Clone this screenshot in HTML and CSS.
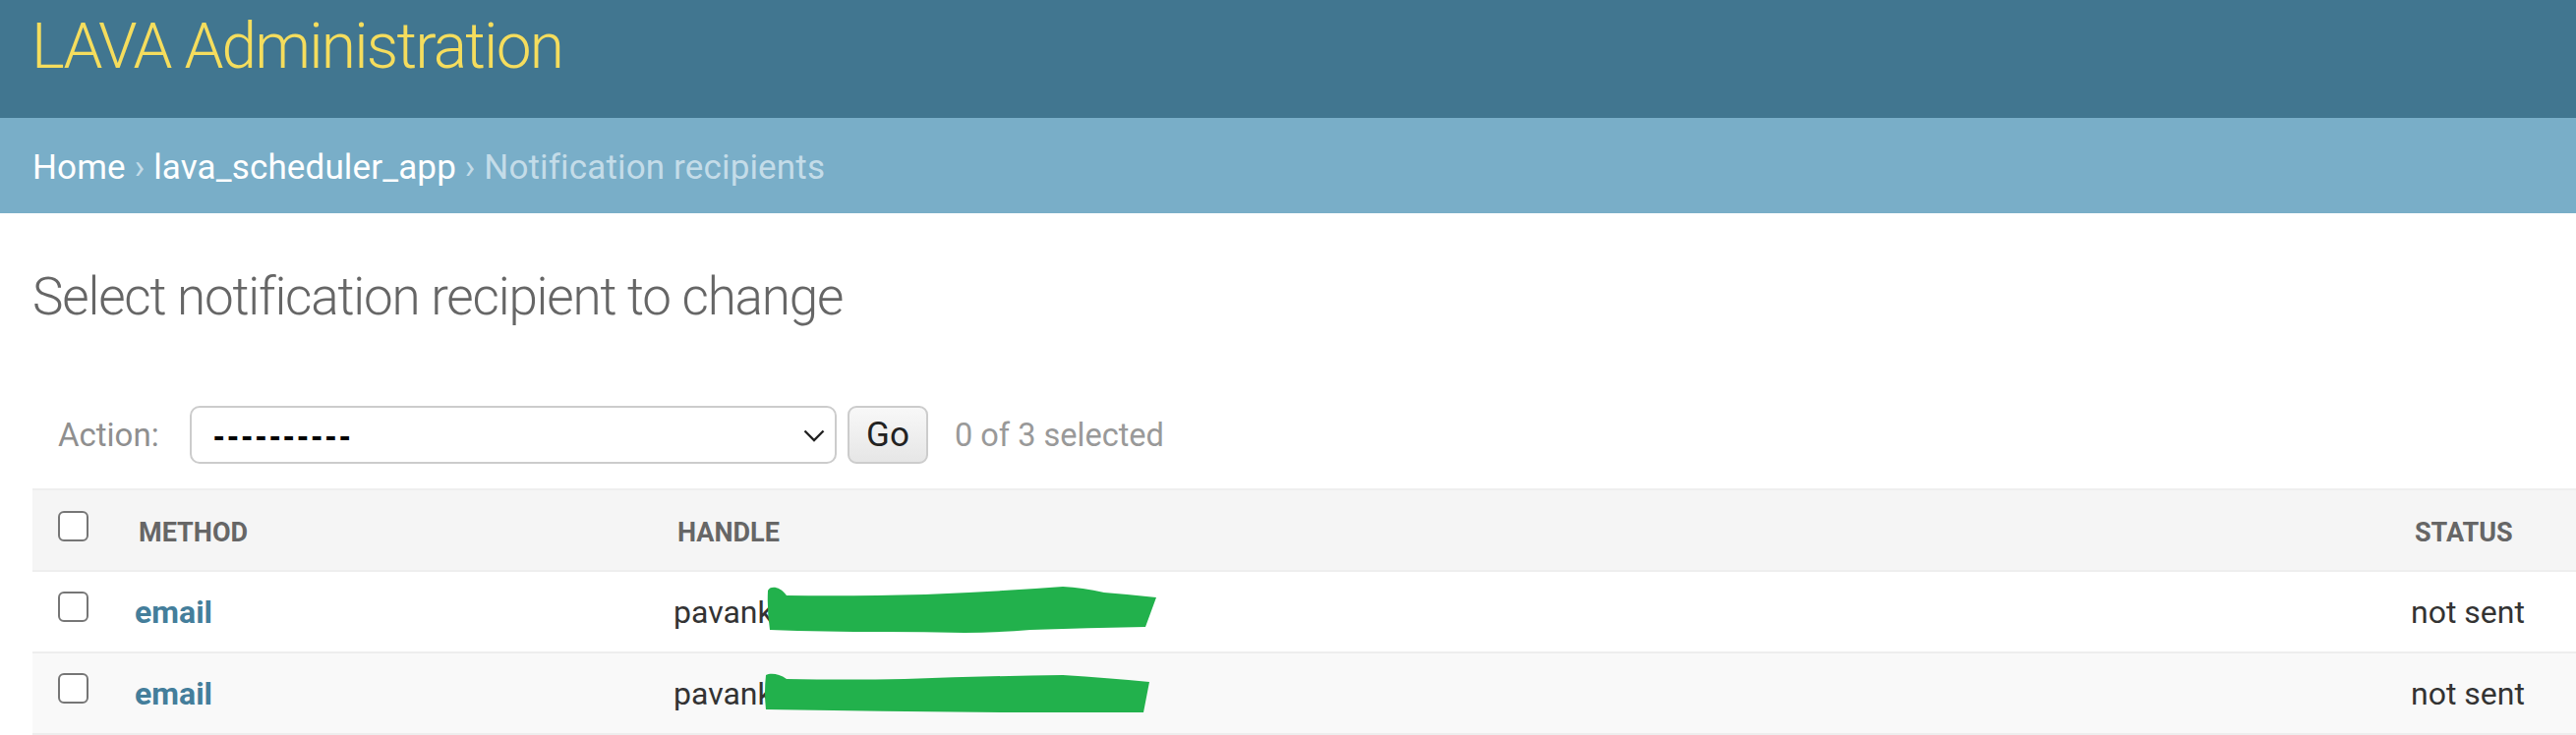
FILE: index.html
```html
<!DOCTYPE html>
<html lang="en">
<head>
    <meta charset="UTF-8">
    <meta name="viewport" content="width=device-width, initial-scale=1.0">
    <title>Select notification recipient to change | LAVA Administration</title>
    <link rel="stylesheet" href="styles.css">
</head>
<body>
    <!-- Header -->
    <div id="header">
        <h1 class="site-name">LAVA Administration</h1>
    </div>

    <!-- Breadcrumbs -->
    <div class="breadcrumbs">
        <a href="#">Home</a> › <a href="#">lava_scheduler_app</a> › Notification recipients
    </div>

    <div class="content">
        <h1 class="page-title">Select notification recipient to change</h1>

        <form id="changelist-form">
            <div class="actions">
                <label for="action-select">Action:</label>
                <div class="select-wrap">
                    <select id="action-select" name="action">
                        <option value="" selected>----------</option>
                        <option value="delete_selected">Delete selected notification recipients</option>
                    </select>
                    <svg class="chevron" width="22" height="13" viewBox="0 0 22 13">
                        <polyline points="1.5,1.5 11,11 20.5,1.5" fill="none" stroke="#222" stroke-width="2.4"/>
                    </svg>
                </div>
                <button type="submit" class="go">Go</button>
                <span class="action-counter">0 of 3 selected</span>
            </div>

            <table id="result-list">
                <colgroup>
                    <col class="col-cb">
                    <col class="col-method">
                    <col class="col-handle">
                    <col class="col-status">
                </colgroup>
                <thead>
                    <tr>
                        <th class="cb"><input type="checkbox" id="action-toggle"></th>
                        <th><span class="th-text">Method</span></th>
                        <th><span class="th-text">Handle</span></th>
                        <th><span class="th-text">Status</span></th>
                    </tr>
                </thead>
                <tbody>
                    <tr class="row1">
                        <td class="cb"><input type="checkbox" name="_selected_action" value="1"></td>
                        <th class="method"><a href="#">email</a></th>
                        <td class="handle">
                            <span class="masked">pavank<svg class="scribble scribble-1" width="398" height="50" viewBox="0 0 398 50">
                                <path d="M1,5 C3,0 13,0 20,10 Q86,11 161,9 Q235,6 301,1 Q321,2 343,7 Q369,9 396,12 L385,42 Q326,43 268,45 Q230,48 201,48 Q160,47 118,47 Q59,47 3,45 Q0,25 1,5 Z" fill="#22b14c"/>
                            </svg></span>
                        </td>
                        <td class="status">not sent</td>
                    </tr>
                    <tr class="row2">
                        <td class="cb"><input type="checkbox" name="_selected_action" value="2"></td>
                        <th class="method"><a href="#">email</a></th>
                        <td class="handle">
                            <span class="masked">pavank<svg class="scribble scribble-2" width="394" height="42" viewBox="0 0 394 42">
                                <path d="M2,2 C6,0 15,0 23,6 Q85,7 143,6 Q225,3 304,2 Q350,5 392,9 L386,40 Q320,40 250,40 Q125,39 2,37 Q0,20 2,2 Z" fill="#22b14c"/>
                            </svg></span>
                        </td>
                        <td class="status">not sent</td>
                    </tr>
                </tbody>
            </table>
        </form>
    </div>
</body>
</html>
```

FILE: styles.css
```css
body {
    margin: 0;
    font-family: Roboto, "Liberation Sans", sans-serif;
    color: #333;
    background: #fff;
    overflow: hidden;
}
a {
    text-decoration: none;
}

/* Header */
#header {
    background: #417690; /* Django admin blue */
    height: 120px;
    box-sizing: border-box;
    padding: 10px 0 0 32px;
}
.site-name {
    margin: 0;
    font-size: 64px;
    font-weight: 300;
    line-height: 75px;
    letter-spacing: -1.8px;
    color: #f5dd5d;
}

/* Breadcrumbs */
.breadcrumbs {
    background: #79aec8;
    padding: 30px 0 26px 33px;
    font-size: 35px;
    line-height: 41px;
    letter-spacing: 0.15px;
    color: #c4dce8;
}
.breadcrumbs a {
    color: #fff;
}

/* Content */
.content {
    padding-left: 33px;
}
.page-title {
    margin: 54px 0 0;
    font-size: 53px;
    font-weight: 300;
    line-height: 62px;
    letter-spacing: -1.2px;
    color: #666;
}

/* Actions bar */
.actions {
    display: flex;
    align-items: center;
    height: 59px;
    margin-top: 80px;
    padding-left: 26px;
}
.actions label {
    width: 134px;
    font-size: 33px;
    color: #8f8f8f;
}
.select-wrap {
    position: relative;
    width: 658px;
    height: 59px;
}
.select-wrap select {
    appearance: none;
    -webkit-appearance: none;
    width: 100%;
    height: 100%;
    box-sizing: border-box;
    margin: 0;
    padding: 0 0 0 22px;
    border: 2px solid #ccc;
    border-radius: 10px;
    background: #fff;
    font-family: "Liberation Sans", Arial, sans-serif;
    font-size: 34px;
    font-weight: bold;
    letter-spacing: 2.9px;
    color: #000;
}
.chevron {
    position: absolute;
    right: 12px;
    top: 24px;
    pointer-events: none;
}
.go {
    width: 82px;
    height: 59px;
    margin: 0 0 0 11px;
    padding: 0;
    border: 2px solid #ccc;
    border-radius: 9px;
    background: linear-gradient(#f8f8f8, #e6e6e6);
    font-family: Roboto, "Liberation Sans", sans-serif;
    font-size: 35px;
    color: #222;
    cursor: pointer;
}
.action-counter {
    margin-left: 27px;
    font-size: 32.5px;
    color: #999;
}

/* Result table */
#result-list {
    width: 100%;
    margin-top: 25px;
    border-collapse: separate;
    border-spacing: 0;
    table-layout: fixed;
}
.col-cb {
    width: 104px;
}
.col-method {
    width: 548px;
}
.col-handle {
    width: 1767px;
}
.col-status {
    width: 168px;
}
#result-list thead th {
    background: #f5f5f5;
    border-top: 2px solid #eee;
    border-bottom: 2px solid #eee;
    padding: 27px 0 22px;
    font-size: 27px;
    font-weight: bold;
    line-height: 32px;
    text-transform: uppercase;
    text-align: left;
    color: #666;
    vertical-align: top;
}
#result-list thead th .th-text {
    padding-left: 4px;
}
#result-list thead th.cb {
    padding: 21px 0 0 26px;
}
#result-list tbody td,
#result-list tbody th {
    padding: 22px 0 21px;
    border-bottom: 2px solid #eee;
    font-size: 32px;
    font-weight: normal;
    line-height: 38px;
    text-align: left;
    vertical-align: top;
    white-space: nowrap;
}
#result-list tbody td.cb {
    padding: 20px 0 0 26px;
}
#result-list tbody .row2 td,
#result-list tbody .row2 th {
    background: #f9f9f9;
}
#result-list .method a {
    color: #447e9b;
    font-weight: bold;
}
input[type="checkbox"] {
    appearance: none;
    -webkit-appearance: none;
    display: block;
    width: 31px;
    height: 31px;
    margin: 0;
    border: 2px solid #767676;
    border-radius: 6px;
    background: #fff;
}

/* Redacted e-mail handle */
.masked {
    position: relative;
    display: inline-block;
}
.scribble {
    position: absolute;
}
.scribble-1 {
    left: 95px;
    top: -8px;
}
.scribble-2 {
    left: 92px;
    top: -2px;
}
```
